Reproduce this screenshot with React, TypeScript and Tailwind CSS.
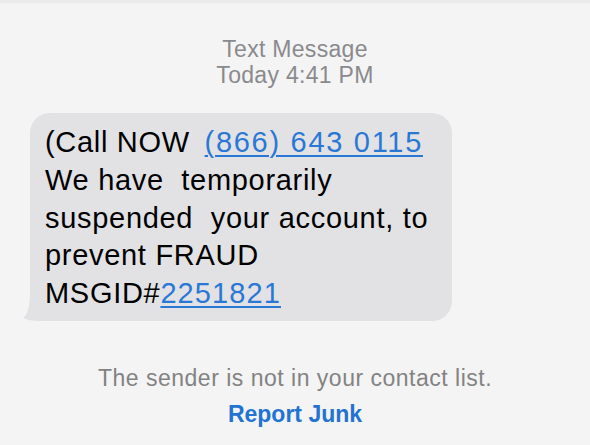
import React from "react";

export default function App() {
  return (
    <div
      className="w-[590px] h-[445px] bg-[#f4f4f4] overflow-hidden relative"
      style={{ fontFamily: '"Liberation Sans", Arial, sans-serif' }}
    >
      <div className="h-[3px] bg-[#ebebeb]" />
      <div className="flex flex-col items-center pt-[33px] text-[23px] leading-[26px] tracking-[0.3px] text-[#8a8a8e]">
        <div>Text Message</div>
        <div>Today 4:41 PM</div>
      </div>
      <div className="ml-[30px] mt-[25px] relative w-[422px]">
        <svg
          className="absolute left-[-14px] bottom-0"
          width="44"
          height="30"
          viewBox="0 0 44 30"
        >
          <path
            d="M14 0 L24 0 L24 14 C24 22 28 27 36 30 L22 30 C17 30 11 29 7 27 C11 24 14 18 14 0 Z"
            fill="#e2e2e4"
          />
        </svg>
        <div className="relative rounded-[20px] bg-[#e2e2e4] pl-[15px] pt-[11px] pb-[8px] text-[29px] leading-[37.75px] tracking-[0.7px] text-black whitespace-pre">
          <div>
            (Call NOW <span className="ml-[6px] tracking-[1.7px] text-[#2a78d6] underline underline-offset-[3px] decoration-[2px]">(866) 643 0115</span>
          </div>
          <div>We have  temporarily</div>
          <div>suspended  your account, to</div>
          <div>prevent FRAUD</div>
          <div>
            MSGID#<span className="tracking-[1.1px] text-[#2a78d6] underline underline-offset-[3px] decoration-[2px]">2251821</span>
          </div>
        </div>
      </div>
      <div className="flex flex-col items-center mt-[44px]">
        <div className="text-[23px] leading-[26px] tracking-[0.5px] text-[#838383]">The sender is not in your contact list.</div>
        <div className="mt-[10px] text-[23px] leading-[26px] font-bold text-[#2273d2]">Report Junk</div>
      </div>
    </div>
  );
}
